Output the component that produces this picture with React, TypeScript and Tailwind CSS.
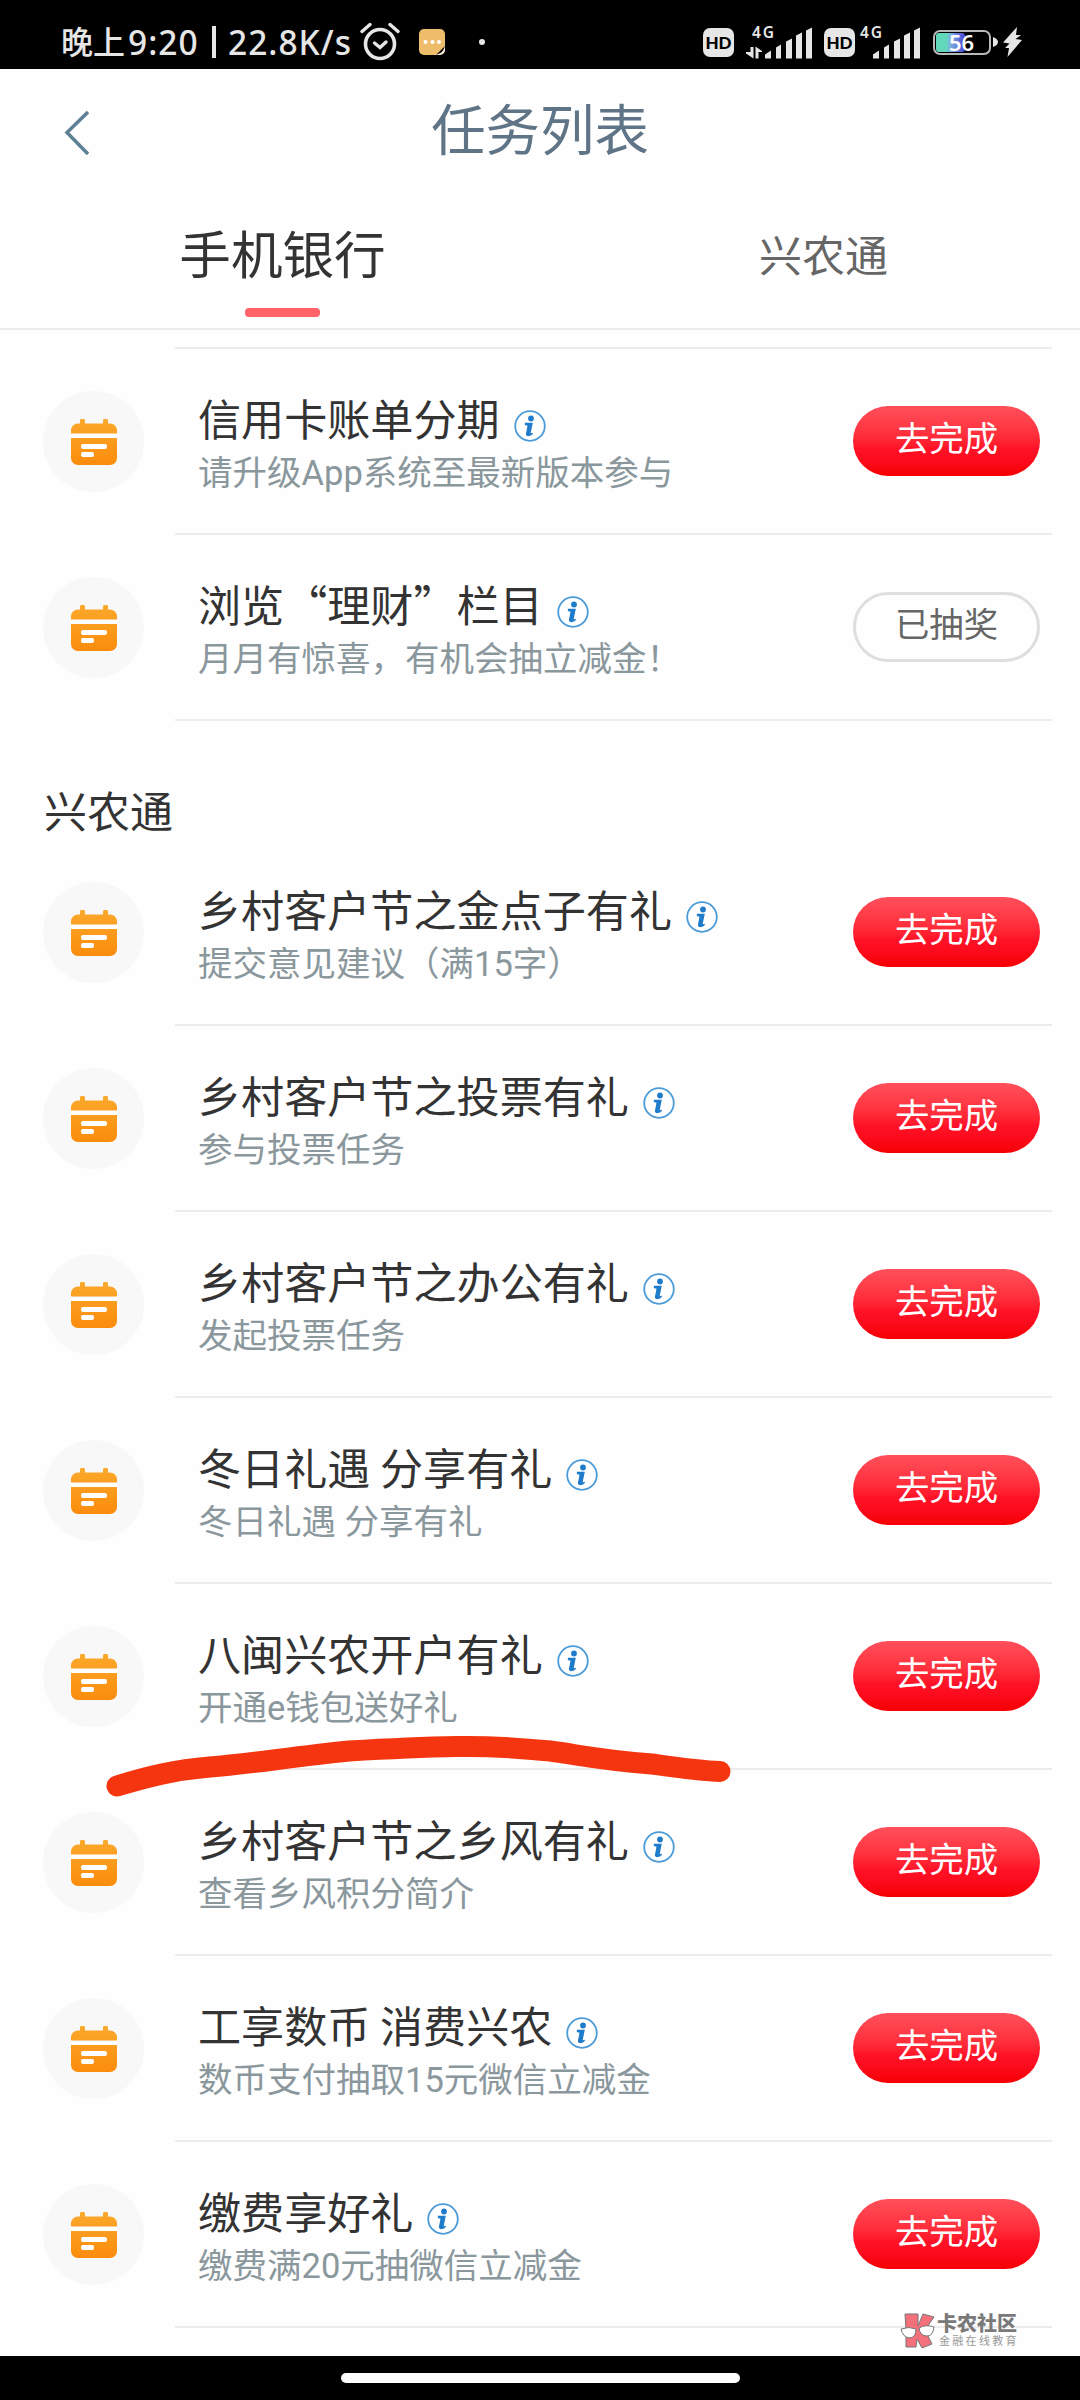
import type { ReactNode } from 'react';

interface Task {
  title: string;
  desc: string;
  done?: boolean;
}

const bankTasks: Task[] = [
  { title: '信用卡账单分期', desc: '请升级App系统至最新版本参与' },
  { title: '浏览“理财”栏目', desc: '月月有惊喜，有机会抽立减金！', done: true },
];

const ruralTasks: Task[] = [
  { title: '乡村客户节之金点子有礼', desc: '提交意见建议（满15字）' },
  { title: '乡村客户节之投票有礼', desc: '参与投票任务' },
  { title: '乡村客户节之办公有礼', desc: '发起投票任务' },
  { title: '冬日礼遇 分享有礼', desc: '冬日礼遇 分享有礼' },
  { title: '八闽兴农开户有礼', desc: '开通e钱包送好礼' },
  { title: '乡村客户节之乡风有礼', desc: '查看乡风积分简介' },
  { title: '工享数币 消费兴农', desc: '数币支付抽取15元微信立减金' },
  { title: '缴费享好礼', desc: '缴费满20元抽微信立减金' },
];

function HdBadge() {
  return (
    <div className="flex h-[29px] w-[31px] items-center justify-center rounded-[7px] bg-[#e6e6e6] font-['Lato','Noto_Sans',sans-serif] text-[17px] leading-none font-black text-black">
      HD
    </div>
  );
}

function Signal({ arrows }: { arrows?: boolean }) {
  return (
    <svg width="68" height="46" viewBox="0 -6 68 46" fill="#e6e6e6">
      <text x="6" y="12.5" fontSize="15.5" fontWeight="600" fontFamily="Noto Sans, sans-serif" textLength="22">
        4G
      </text>
      {arrows && <path d="M4.500 22h3v11.500L0 28.500v-1.500h4.500zM9.500 33.500h3V27H16v-1L9.500 21.500z" />}
      <path d="M19 33.500v-4l6-4v8zM30 33.500V22.500l5-3v14zM40 33.500V16.500l6-3v20zM50 33.500V10.500l6-3v26zM60 33.500V5.500l6-3v31z" />
    </svg>
  );
}

function StatusBar() {
  return (
    <div className="flex h-[69px] items-center bg-black pt-[15px] pl-[61px] text-[#e6e6e6]">
      <div className="flex w-[292px] items-center text-[32px] leading-[40px] font-medium whitespace-pre">
        <span className="w-[67px] pt-[2px] text-[32px]">晚上</span>
        <span className="w-[84px] font-['Noto_Sans',sans-serif] text-[33.500px] tracking-[1px]">9:20</span>
        <span className="h-[32px] w-[4px] bg-[#e6e6e6]" />
        <span className="ml-[12px] font-['Noto_Sans',sans-serif] text-[33.500px] tracking-[1px]">22.8K/s</span>
      </div>
      <svg className="ml-[7px]" width="40" height="40" viewBox="0 0 40 40" fill="none" stroke="#e6e6e6" strokeLinecap="round">
        <circle cx="20" cy="22" r="14.500" strokeWidth="3.600" />
        <path d="M2 9.500L10 2.500M38 9.500L30 2.500" strokeWidth="3.400" />
        <path d="M14.500 21L20 25.500L26 20" strokeWidth="3.400" />
      </svg>
      <svg className="ml-[19px]" width="26" height="26" viewBox="0 0 26 26">
        <path d="M5 0h16a5 5 0 0 1 5 5v12l-9 9H5a5 5 0 0 1-5-5V5a5 5 0 0 1 5-5z" fill="#edbd6c" />
        <path d="M26 16v5a5 5 0 0 1-5 5h-5c6-1 9-4 10-10z" fill="#fdf3dc" />
        <circle cx="6.500" cy="13" r="2" fill="#fff" />
        <circle cx="13.500" cy="13" r="2" fill="#fff" />
        <circle cx="20" cy="13" r="2" fill="#fff" />
      </svg>
      <span className="ml-[34px] h-[6px] w-[6px] rounded-full bg-[#e6e6e6]" />
      <div className="ml-[218px] flex items-center">
        <HdBadge />
        <div className="ml-[12px]"><Signal arrows /></div>
        <div className="ml-[10px]"><HdBadge /></div>
        <div className="-ml-[1px]"><Signal /></div>
        <div className="ml-[11px] flex items-center">
          <div className="flex h-[25px] w-[58px] items-center rounded-[7px] border-2 border-[#b9b9b9] p-[1px]">
            <div className="flex h-[19px] w-[29px] items-center rounded-[3px] bg-linear-to-r from-[#62d8bb] from-35% via-[#7eaee0] via-50% to-[#4c40d0]">
              <span className="ml-[13px] font-['Noto_Sans',sans-serif] text-[22px] leading-none font-semibold text-white">56</span>
            </div>
          </div>
          <svg className="ml-[2px]" width="30" height="30" viewBox="0 0 30 30" fill="#e6e6e6">
            <path d="M0 10c3 1 5 3 5 5s-2 4-5 5z" />
            <path d="M24 0L10 15.500l6.500 1L12 21h4L14.500 30L29 13l-6.500-1L28 8h-5z" />
          </svg>
        </div>
      </div>
    </div>
  );
}

function CalendarIcon() {
  return (
    <svg width="46" height="46" viewBox="0 0 46 46">
      <defs>
        <linearGradient id="cal" x1="0" y1="0" x2="0" y2="1">
          <stop offset="0" stopColor="#fba92c" />
          <stop offset="1" stopColor="#fb8c0c" />
        </linearGradient>
      </defs>
      <path
        d="M9 2a2 2 0 0 1 5 0v2.500h18V2a2 2 0 0 1 5 0v2.500h2a7 7 0 0 1 7 7V39a7 7 0 0 1-7 7H7a7 7 0 0 1-7-7V11.500a7 7 0 0 1 7-7h2z"
        fill="url(#cal)"
      />
      <path d="M0 14.500h46v4.500H0z" fill="#fff" />
      <rect x="10" y="25" width="26" height="5" rx="2" fill="#fff" />
      <rect x="10" y="33" width="13" height="5" rx="2" fill="#fff" />
    </svg>
  );
}

function InfoIcon() {
  return (
    <svg width="32" height="32" viewBox="0 0 32 32">
      <circle cx="16" cy="16" r="14.800" fill="#fff" stroke="#4b9bd8" strokeWidth="1.800" />
      <circle cx="17" cy="8.500" r="2.900" fill="#1f7cca" />
      <path d="M11.500 13.500h6.500l-2 9.500c-.2 1.200.8 1.200 2.600.2-1.400 2.200-6.400 3.600-6 .6l1.600-8.300c-.6-.8-1.500-.8-2.700-.8z" fill="#1f7cca" stroke="#1f7cca" strokeWidth="1.300" />
    </svg>
  );
}

function TaskRow({ task }: { task: Task }) {
  return (
    <div className="flex h-[186px] pl-[43px]">
      <div className="mt-[42px] flex h-[101px] w-[101px] shrink-0 items-center justify-center rounded-full bg-[#f8f8f8]">
        <CalendarIcon />
      </div>
      <div className="ml-[31px] flex w-[877px] border-b-2 border-[#ececec] pl-[23px]">
        <div className="flex-1 pt-[42px]">
          <div className="flex h-[60px] items-center font-['Noto_Sans_CJK_SC',sans-serif] text-[43.100px] whitespace-pre text-[#333]">
            <span className="mb-[9px] leading-[50px]">{task.title}</span>
            <span className="mt-[9px] ml-[14px]"><InfoIcon /></span>
          </div>
          <p className="h-[44px] text-[34.500px] leading-[44px] whitespace-nowrap text-[#8a979c]">{task.desc}</p>
        </div>
        {task.done ? (
          <button className="mt-[57px] mr-[12px] h-[70px] w-[187px] rounded-full border-3 border-[#dedede] pb-[3px] text-[34.400px] leading-none text-[#666]">
            已抽奖
          </button>
        ) : (
          <button className="mt-[57px] mr-[12px] h-[70px] w-[187px] rounded-full bg-linear-to-b from-[#ff4f5b] via-[#ff1228] via-60% to-[#f60000] pb-[3px] text-[34.400px] leading-none text-white">
            去完成
          </button>
        )}
      </div>
    </div>
  );
}

function Tab({ active, children }: { active?: boolean; children: ReactNode }) {
  return (
    <div className="flex w-[541px] shrink-0 flex-col items-center">
      <span className={active ? 'h-[80px] text-[51.600px] leading-[80px] text-[#333]' : 'h-[80px] text-[43px] leading-[80px] text-[#666]'}>
        {children}
      </span>
      {active && <span className="mt-[11px] h-[9px] w-[75px] rounded-[4px] bg-[#ff6368]" />}
    </div>
  );
}

function Watermark() {
  return (
    <div className="absolute top-[2313px] left-[900px] flex">
      <svg width="36" height="36" viewBox="0 0 36 36" stroke="#777" strokeWidth="1">
        <path d="M5 1h13v12l5-12 11 3-9 13 7 14-10 4-5-9-1 8H6V17z" fill="#f4717c" />
        <path d="M1 16q8-3 15 0q0 9-7 9q-6-1-8-9zM19 15q7-4 15-1q-1 9-7 9q-7 0-8-8z" fill="#fff" />
      </svg>
      <div className="ml-[1px] whitespace-nowrap">
        <p className="text-[20px] leading-[22px] font-black text-[#7a7a7a]">卡农社区</p>
        <p className="ml-[2px] text-[11px] leading-[14px] tracking-[2.300px] text-[#999]">金融在线教育</p>
      </div>
    </div>
  );
}

export default function App() {
  return (
    <div lang="zh-CN" className="relative flex h-[2400px] w-[1080px] flex-col overflow-hidden bg-[#fefefe] font-['Roboto','Noto_Sans_CJK_SC',sans-serif]">
      <StatusBar />
      <header className="relative flex h-[119px] items-center justify-center pt-[6px] text-[54.400px] text-[#5f7486]">
        <svg className="absolute top-[41px] left-[62px]" width="27" height="46" viewBox="0 0 27 46" fill="none" stroke="#5f7f95" strokeWidth="3.500">
          <path d="M26 2L5 22.500L26 44" />
        </svg>
        <h1>任务列表</h1>
      </header>
      <nav className="flex h-[142px] border-b-2 border-[#ececec] pt-[29px] pl-[12px]">
        <Tab active>手机银行</Tab>
        <Tab>兴农通</Tab>
      </nav>
      <main className="flex-1">
        <div className="mt-[17px] ml-[175px] h-[2px] w-[877px] bg-[#ececec]" />
        {bankTasks.map((task) => (
          <TaskRow key={task.title} task={task} />
        ))}
        <h2 className="h-[119px] pt-[60px] pl-[44px] text-[43px] leading-[64px] text-[#333]">兴农通</h2>
        {ruralTasks.map((task) => (
          <TaskRow key={task.title} task={task} />
        ))}
      </main>
      <footer className="flex h-[44px] items-center justify-center bg-black">
        <span className="h-[10px] w-[399px] rounded-full bg-white" />
      </footer>
      {/* hand-drawn marker stroke */}
      <svg className="absolute top-[1730px] left-[100px]" width="640" height="70" viewBox="100 1730 640 70" fill="none">
        <path
          d="M117 1786C150 1776 175 1770 210 1767C250 1764 290 1757 349 1751C400 1748 430 1747 457 1746.500C490 1746 520 1748 550 1751C580 1755 600 1760 652 1764C680 1768 700 1771 720 1771.500"
          stroke="#f53510"
          strokeWidth="21"
          strokeLinecap="round"
          strokeLinejoin="round"
        />
      </svg>
      <Watermark />
    </div>
  );
}
